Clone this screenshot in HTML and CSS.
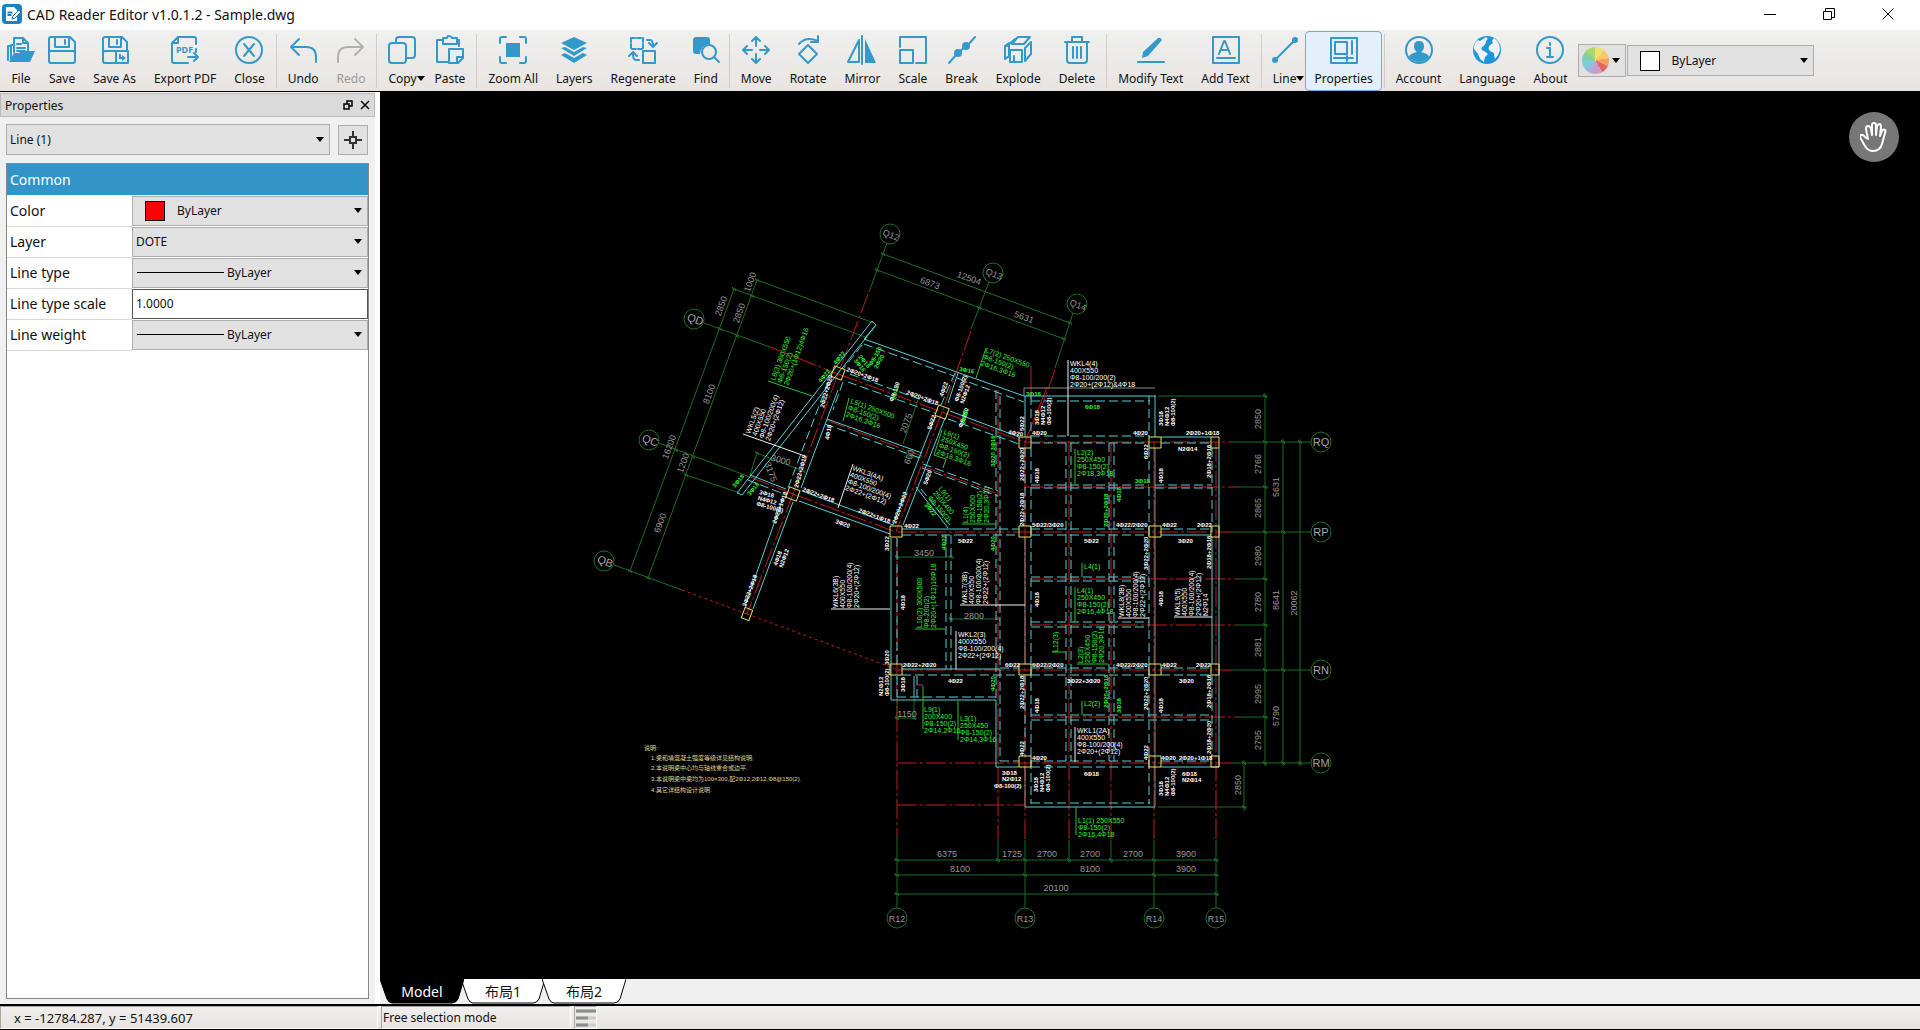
FILE: index.html
```
<!DOCTYPE html>
<html lang="en">
<head>
  <meta charset="UTF-8">
  <meta name="viewport" content="width=device-width, initial-scale=1.0">
  <title>CAD Reader Editor v1.0.1.2 - Sample.dwg</title>
  <link rel="stylesheet" href="styles.css">
</head>
<body>

  <header class="titlebar">
    <svg class="app-logo" viewBox="0 0 20 20"><rect width="20" height="20" rx="4" fill="#1583c4"/><path d="M4 3h8l3 3v11H4z" fill="#fff"/><path d="M5.500 8.500h5M5.500 11h4" stroke="#1583c4" stroke-width="2"/><path d="M10 15l1-3 6-6 2 2-6 6z" fill="#fff" stroke="#1583c4"/></svg>
    <h1>CAD Reader Editor v1.0.1.2 - Sample.dwg</h1>
    <div class="window-buttons">
      <button aria-label="Minimize"><svg viewBox="0 0 12 12"><path d="M0 6.500h12"/></svg></button>
      <button aria-label="Restore"><svg viewBox="0 0 12 12"><path d="M.5 3.500h8v8h-8zM2.500 3.500v-3h9v9h-3"/></svg></button>
      <button aria-label="Close window"><svg viewBox="0 0 12 12"><path d="M.5.5l11 11M11.500.5l-11 11"/></svg></button>
    </div>
  </header>

  <nav class="toolbar">
    <div class="group">
      <button class="tool"><svg viewBox="0 0 28 28"><path d="M4 23V9h3M7 16V2h9l5 5v8M16 2v5h5M10 8h4M10 12h8M10 15h8"/><path class="fill" d="M2 26l5-9h5l2-2h14l-5 11z"/><path d="M1 24V10h3"/></svg><span>File</span></button>
      <button class="tool"><svg viewBox="0 0 28 28"><path d="M1 3q0-2 2-2h19l5 5v19q0 2-2 2H3q-2 0-2-2zM7 1v10h14V1M17 4v4M1 17q0-2 2-2h22q2 0 2 2"/></svg><span>Save</span></button>
      <button class="tool"><svg viewBox="0 0 28 28"><path d="M14 27H4q-2 0-2-2V3q0-2 2-2h17l5 5v8M8 1v10h12V1M16 4v4M2 17q0-2 2-2h11M15 15h12v12H15z"/><path class="fill" d="M18 18v5h3v2l4-3-4-3v2h-1v-3z"/></svg><span>Save As</span></button>
      <button class="tool"><svg viewBox="0 0 28 28"><path d="M25 8V3q0-2-2-2H7L1 7v18q0 2 2 2h14M7 1v6H1M25 13v3M17 21h10M23 17l4 4-4 4"/><text x="5" y="17">PDF</text></svg><span>Export PDF</span></button>
      <button class="tool"><svg viewBox="0 0 28 28"><circle cx="14" cy="14" r="13"/><path d="M9 8l10 12M19 8L9 20"/></svg><span>Close</span></button>
    </div>
    <div class="group">
      <button class="tool"><svg viewBox="0 0 28 28"><path d="M10 3l-8 8 8 8M2 11h15q10 0 10 10v5"/></svg><span>Undo</span></button>
      <button class="tool off" disabled><svg viewBox="0 0 28 28"><path d="M18 3l8 8-8 8M26 11H11Q1 11 1 21v5"/></svg><span>Redo</span></button>
    </div>
    <div class="group">
      <button class="tool"><svg viewBox="0 0 28 28"><rect x="1" y="7" width="17" height="20" rx="3"/><path d="M8 6V4q0-3 3-3h13q3 0 3 3v15q0 3-3 3h-5"/></svg><span class="drop">Copy</span></button>
      <button class="tool"><svg viewBox="0 0 28 28"><path d="M7 4H1v22h11M21 4h2v6M7 2h4q0-2 2-2t3 2h5v6H7zM13 13h14v9l-5 5h-9zM27 21h-6v6"/></svg><span>Paste</span></button>
    </div>
    <div class="group">
      <button class="tool"><svg viewBox="0 0 28 28"><path d="M1 7V3q0-2 2-2h4M21 1h4q2 0 2 2v4M27 21v4q0 2-2 2h-4M7 27H3q-2 0-2-2v-4"/><path class="fill" d="M7 7h14v14H7z"/></svg><span>Zoom All</span></button>
      <button class="tool"><svg viewBox="0 0 28 28"><path class="fill" d="M14 1l13 6-13 7L1 7zM1 12l4-1 9 5 9-5 4 1-13 8zM1 19l4-2 9 5 9-5 4 2-13 8z"/></svg><span>Layers</span></button>
      <button class="tool"><svg viewBox="0 0 28 28"><path d="M2 2h12v11H2z" stroke-dasharray="4 2"/><path d="M14 15h12v12H14zM18 4h3q3 0 3 6M20 7l4 4 4-4M10 24H7q-3 0-3-6M0 20l4-4 4 4"/></svg><span>Regenerate</span></button>
      <button class="tool"><svg viewBox="0 0 28 28"><path class="fill" d="M1 4q0-3 3-3h11q3 0 3 3v4q-9 0-10 10H4q-3 0-3-3z"/><circle cx="17" cy="16" r="7"/><path d="M22 21l5 5"/></svg><span>Find</span></button>
    </div>
    <div class="group">
      <button class="tool"><svg viewBox="0 0 28 28"><path d="M14 2v8M14 18v8M2 14h8M18 14h8M10 5l4-4 4 4M10 23l4 4 4-4M5 10l-4 4 4 4M23 10l4 4-4 4"/></svg><span>Move</span></button>
      <button class="tool"><svg viewBox="0 0 28 28"><path d="M14 9l9 9-9 9-9-9zM5 8q7-8 19-3M24 0v6h-7"/></svg><span>Rotate</span></button>
      <button class="tool"><svg viewBox="0 0 28 28"><path d="M11 4v22H0z"/><path class="fill" d="M17 3v24h11z"/><path d="M14 0v28" stroke-dasharray="4 1"/></svg><span>Mirror</span></button>
      <button class="tool"><svg viewBox="0 0 28 28"><path d="M1 11V1h26v26H17M1 14h13v13H1z"/></svg><span>Scale</span></button>
      <button class="tool"><svg viewBox="0 0 28 28"><path d="M1 27l7-8M20 9l7-8M10 17l8-7" /><circle class="fill" cx="10" cy="17" r="4"/><circle class="fill" cx="18" cy="10" r="4"/></svg><span>Break</span></button>
      <button class="tool"><svg viewBox="0 0 28 28"><path d="M6 14h12v12H6zM1 23V10l4-3v13zM8 8l6-7h12l-6 7zM21 12l6-6v12l-6 7zM3 10l8-7M10 20v6"/></svg><span>Explode</span></button>
      <button class="tool"><svg viewBox="0 0 28 28"><path d="M2 6h24M9 5V1h10v4M4 7v17q0 3 3 3h14q3 0 3-3V7M10 11v11M14 11v11M18 11v11"/></svg><span>Delete</span></button>
    </div>
    <div class="group">
      <button class="tool"><svg viewBox="0 0 28 28"><path class="fill" d="M20 3q3-3 5 1L11 20l-6 2 1-6z"/><path d="M1 26h26"/></svg><span>Modify Text</span></button>
      <button class="tool"><svg viewBox="0 0 28 28"><path d="M1 1h26v26H1zM5 22h18M7 18l5-13h1l5 13M9 14h7"/></svg><span>Add Text</span></button>
    </div>
    <div class="group">
      <button class="tool"><svg viewBox="0 0 28 28"><path d="M4 24L24 4"/><circle class="fill" cx="4" cy="24" r="3"/><circle class="fill" cx="24" cy="4" r="3"/></svg><span class="drop">Line</span></button>
      <button class="tool active"><svg viewBox="0 0 28 28"><path d="M1 2h26v25H1zM5 6h12v12H5zM22 5v13M4 22h19M17 20v5"/></svg><span>Properties</span></button>
    </div>
    <div class="group">
      <button class="tool"><svg viewBox="0 0 28 28"><circle cx="14" cy="14" r="13"/><path class="fill" d="M14 5q5 0 5 5 0 4-3 6 8 2 8 5-4 5-10 5T4 21q0-3 8-5-3-2-3-6 0-5 5-5z"/></svg><span>Account</span></button>
      <button class="tool"><svg viewBox="0 0 28 28"><circle class="globe" cx="14" cy="14" r="14"/><path class="land" d="M13 1q3 2 0 4 0 4-4 6-2 3 2 4l4 3-3 3-1 5q-5-3-6-8l-4-5q-1-5 4-9l2 1zM21 2q6 4 6 12-1 5-5 9-1-3-1-6l-4-2q-3-3 0-6l3-2-1-2z"/></svg><span>Language</span></button>
      <button class="tool"><svg viewBox="0 0 28 28"><circle cx="14" cy="14" r="13"/><path d="M11 12h3v9M11 21h6M14 7v2"/></svg><span>About</span></button>
    </div>
    <button class="color-picker" aria-label="Color"><span class="wheel"></span><span class="arrow"></span></button>
    <div class="combo top-color">
      <i class="swatch white"></i>
      <select aria-label="Current color"><option>ByLayer</option></select>
    </div>
  </nav>

  <main class="workspace">
    <aside class="panel">
      <div class="panel-head">
        <h2>Properties</h2>
        <button aria-label="Float panel"><svg viewBox="0 0 10 10"><path d="M1 4h5v5H1zM4 4V1h5v5H6"/></svg></button>
        <button aria-label="Close panel"><svg viewBox="0 0 10 10"><path d="M1 1l8 8M9 1L1 9"/></svg></button>
      </div>
      <div class="picker">
        <div class="combo"><select aria-label="Selected entity"><option>Line (1)</option></select></div>
        <button class="pick" aria-label="Pick entity"><svg viewBox="0 0 18 18"><path d="M6 6h6v6H6zM9 0v6M9 12v6M0 9h6M12 9h6"/></svg></button>
      </div>
      <div class="sheet">
        <table>
          <colgroup><col class="key"><col></colgroup>
          <thead>
            <tr><th colspan="2">Common</th></tr>
          </thead>
          <tbody>
            <tr>
              <th><label for="color">Color</label></th>
              <td><div class="combo"><i class="swatch red"></i><select id="color"><option>ByLayer</option></select></div></td>
            </tr>
            <tr>
              <th><label for="layer">Layer</label></th>
              <td><div class="combo"><select id="layer"><option>DOTE</option></select></div></td>
            </tr>
            <tr>
              <th><label for="ltype">Line type</label></th>
              <td><div class="combo"><i class="stroke"></i><select id="ltype"><option>ByLayer</option></select></div></td>
            </tr>
            <tr>
              <th><label for="lscale">Line type scale</label></th>
              <td><input id="lscale" type="text" value="1.0000"></td>
            </tr>
            <tr>
              <th><label for="lweight">Line weight</label></th>
              <td><div class="combo"><i class="stroke"></i><select id="lweight"><option>ByLayer</option></select></div></td>
            </tr>
          </tbody>
        </table>
      </div>
    </aside>

    <section class="view">
      <div class="model">
        <svg id="drawing" viewBox="380 92 1540 887"></svg>
        <button class="pan" aria-label="Pan"><svg viewBox="0 0 28 32"><path d="M8 18L6 8q0-3 2-3t3 3l1 6V4q0-2 2-2t2 2v10l1-9q1-2 3-2 1 1 1 3l-1 9 2-5q1-2 3-1 1 1 0 3l-3 11q-2 7-9 7-5 0-8-5l-4-7q-2-3 0-4t4 2z"/></svg></button>
      </div>
      <div class="tabs">
        <button class="tab current"><svg viewBox="0 0 84 25" preserveAspectRatio="none"><path d="M0 0l7 20q2 4 5 4h60q4 0 6-4l6-20z"/></svg><span>Model</span></button>
        <button class="tab"><svg viewBox="0 0 84 25" preserveAspectRatio="none"><path d="M0 0l7 20q2 4 5 4h60q4 0 6-4l6-20"/></svg><span>布局1</span></button>
        <button class="tab"><svg viewBox="0 0 84 25" preserveAspectRatio="none"><path d="M0 0l7 20q2 4 5 4h60q4 0 6-4l6-20"/></svg><span>布局2</span></button>
      </div>
    </section>
  </main>

  <footer class="status">
    <span class="coords">x = -12784.287, y = 51439.607</span>
    <span class="mode">Free selection mode</span>
    <span class="bars"><svg viewBox="0 0 20 18"><path d="M0 2h20M0 9h20M0 16h20" stroke="#ccc" stroke-width="3"/><path d="M0 2h20M0 9h12M0 16h12" stroke="#8c8c8c" stroke-width="3"/></svg></span>
  </footer>

  <script src="drawing.js"></script>
</body>
</html>
```

FILE: styles.css
```
* {
  box-sizing: border-box;
}

body {
  margin: 0;
  height: 100vh;
  display: flex;
  flex-direction: column;
  font-family: 'Noto Sans', 'Noto Sans CJK SC', sans-serif;
  font-size: 12px;
  color: #111;
  background: #fff;
  border-bottom: 1px solid #000;
}

button, select, input {
  font: inherit;
  color: inherit;
}

h1, h2 {
  margin: 0;
  font-weight: normal;
}

svg {
  display: block;
  fill: none;
}

/* title bar */
.titlebar {
  height: 30px;
  display: flex;
  align-items: center;
  padding: 0 3px 2px 2px;
  flex: none;
}

.app-logo {
  width: 20px;
  height: 20px;
}

.titlebar h1 {
  font-size: 14px;
  margin-left: 5px;
  flex: 1;
}

.window-buttons {
  display: flex;
}

.window-buttons button {
  width: 59px;
  height: 28px;
  padding: 0;
  border: 0;
  background: none;
  display: grid;
  place-items: center;
}

.window-buttons svg {
  width: 12px;
  height: 12px;
  stroke: #000;
}

/* toolbar */
.toolbar {
  flex: none;
  height: 62px;
  display: flex;
  align-items: center;
  padding-left: 2px;
  background: linear-gradient(#f0f0ee, #e8e4e1);
  border-bottom: 1px solid #000;
}

.group {
  display: flex;
  align-items: center;
  height: 54px;
}

.group + .group {
  border-left: 1px solid #cfcdcb;
  margin-left: 2px;
  padding-left: 2px;
}

.tool {
  height: 60px;
  padding: 4px 8px 0;
  border: 1px solid transparent;
  border-radius: 4px;
  background: none;
  display: flex;
  flex-direction: column;
  align-items: center;
  gap: 6px;
  line-height: 18px;
  white-space: nowrap;
}

.tool svg {
  width: 28px;
  height: 28px;
  margin: 0 -4px;
  overflow: visible;
  stroke: #3399cb;
  stroke-width: 2;
  stroke-linecap: round;
  stroke-linejoin: round;
}

.tool .fill {
  fill: #3399cb;
  stroke: none;
}

.tool svg text {
  fill: #3399cb;
  stroke: none;
  font-size: 9px;
  font-weight: bold;
}

.tool .globe {
  fill: #1b96dd;
  stroke: none;
}

.tool .land {
  fill: #f2f1ef;
  stroke: none;
}

.tool.off {
  color: #999;
}

.tool.off svg {
  stroke: #b3b1af;
}

.tool.active {
  background: #e5effc;
  border-color: #7ea4de;
}

.drop {
  display: flex;
  align-items: center;
}

.drop::after,
.arrow {
  content: "";
  border: 4px solid transparent;
  border-top: 5px solid #000;
  border-bottom: 0;
}

.drop::after {
  margin-right: -8px;
}

.color-picker {
  width: 48px;
  height: 33px;
  margin-left: 1px;
  padding: 0 5px 0 3px;
  border: 1px solid #adadad;
  background: #e1e1e1;
  display: flex;
  align-items: center;
  justify-content: space-between;
}

.wheel {
  width: 27px;
  height: 27px;
  border-radius: 50%;
  background: conic-gradient(#f0e070 0 40deg, #f5c76a 0 80deg, #f0a060 0 115deg, #e56560 0 150deg, #c9a0cc 0 200deg, #9bb8e0 0 235deg, #79cfd3 0 275deg, #7fcfa8 0 310deg, #a6d86c 0);
}

/* combo boxes */
.combo {
  display: flex;
  align-items: center;
  min-width: 0;
  height: 31px;
  border: 1px solid #adadad;
  background: #e1e1e1;
}

.combo select {
  flex: 1;
  min-width: 0;
  height: 100%;
  padding: 0 3px;
  border: 0;
  background: none;
  appearance: none;
}

.combo::after {
  content: "";
  margin-right: 5px;
  border: 4px solid transparent;
  border-top: 5px solid #000;
  border-bottom: 0;
}

.combo.top-color {
  width: 187px;
  margin-left: 1px;
}

.swatch {
  width: 20px;
  height: 20px;
  border: 1px solid #000;
  margin: 0 9px 0 12px;
}

.swatch.white {
  background: #fff;
}

.swatch.red {
  background: #f00;
}

.stroke {
  width: 87px;
  height: 1px;
  margin-left: 4px;
  background: #000;
}

/* properties panel */
.workspace {
  flex: 1;
  min-height: 0;
  display: flex;
}

.panel {
  width: 380px;
  flex: none;
  display: flex;
  flex-direction: column;
  background: #f0f0f0;
  border-right: 5px solid #fcfcfc;
  padding-top: 1px;
}

.panel-head {
  height: 24px;
  display: flex;
  align-items: center;
  padding: 0 4px;
  background: #dadada;
  border: 1px solid #b9b9b9;
}

.panel-head h2 {
  font-size: 12px;
  flex: 1;
}

.panel-head button {
  padding: 0;
  margin-left: 7px;
  border: 0;
  background: none;
}

.panel-head svg {
  width: 10px;
  height: 10px;
  stroke: #000;
  stroke-width: 1.5;
}

.picker {
  display: flex;
  align-items: center;
  gap: 8px;
  padding: 7px 7px 8px 6px;
}

.picker .combo {
  flex: 1;
}

.pick {
  width: 30px;
  height: 30px;
  padding: 0;
  border: 1px solid #adadad;
  background: #e1e1e1;
  display: grid;
  place-items: center;
}

.pick svg {
  width: 18px;
  height: 18px;
  stroke: #333;
  stroke-width: 2;
}

.sheet {
  flex: 1;
  margin: 0 6px 5px;
  border: 1px solid #888;
  background: #fff;
}

.sheet table {
  width: 100%;
  table-layout: fixed;
  border-collapse: collapse;
}

.sheet .key {
  width: 125px;
}

.sheet tr {
  height: 31px;
}

.sheet th {
  padding: 0 3px;
  text-align: left;
  font-size: 14px;
  font-weight: normal;
}

.sheet thead th {
  background: #3294c7;
  color: #fff;
}

.sheet tbody th {
  border-bottom: 1px solid #d8d8d8;
}

.sheet td {
  padding: 0;
}

.sheet .combo {
  height: 30px;
}

.sheet input {
  display: block;
  width: 100%;
  height: 30px;
  padding: 0 3px;
  border: 1px solid #555;
  background: #fff;
}

/* drawing area */
.view {
  flex: 1;
  min-width: 0;
  display: flex;
  flex-direction: column;
}

.model {
  flex: 1;
  min-height: 0;
  position: relative;
  background: #000;
}

#drawing {
  width: 100%;
  height: 100%;
  font-family: 'Liberation Sans', 'Noto Sans CJK SC', sans-serif;
}

#drawing path, #drawing circle {
  stroke-width: 1;
}

.cyan { stroke: #55cfd6; }
.dash { stroke: #55cfd6; stroke-dasharray: 9 4; }
.axis { stroke: #c01c1c; stroke-dasharray: 20 3 3 3; }
.dots { stroke: #c01c1c; stroke-dasharray: 3 3; }
.red { stroke: #c01c1c; }
.green { stroke: #1b6e22; }
.lime { stroke: #2fc02f; }
.white { stroke: #f2f2f2; }
.gray { stroke: #8a8a8a; }
.pink { stroke: #b030b0; }
.node { stroke: #e8e060; }
.ring { stroke: #1b6e22; }

.t-dim { fill: #979797; font-size: 9px; }
.t-axis { fill: #a5a5a5; font-size: 11px; }
.t-white { fill: #fff; font-size: 7px; }
.t-lime { fill: #35f035; font-size: 7px; }
.t-small { fill: #fff; font-size: 6px; font-weight: bold; }
.t-tiny { fill: #35f035; font-size: 6px; font-weight: bold; }
.t-note { fill: #e6d28a; font-size: 6px; }

.pan {
  position: absolute;
  top: 20px;
  right: 21px;
  width: 50px;
  height: 50px;
  padding: 0;
  border: 0;
  border-radius: 50%;
  background: #777;
  display: grid;
  place-items: center;
}

.pan svg {
  width: 28px;
  height: 32px;
  stroke: #fff;
  stroke-width: 2;
  stroke-linejoin: round;
}

.tabs {
  flex: none;
  height: 25px;
  display: flex;
  background: #f0f0f0;
}

.tab {
  width: 84px;
  height: 25px;
  padding: 0;
  margin-right: -3px;
  border: 0;
  background: none;
  display: grid;
  font-size: 14px;
  line-height: 26px;
}

.tab svg, .tab span {
  grid-area: 1 / 1;
}

.tab svg {
  width: 84px;
  height: 25px;
  fill: #fff;
  stroke: #000;
}

.tab.current {
  color: #fff;
  z-index: 1;
}

.tab.current svg {
  fill: #000;
}

/* status bar */
.status {
  flex: none;
  height: 25px;
  display: flex;
  gap: 3px;
  border-top: 2px solid #000;
  background: linear-gradient(#f0f0ee, #e6e2df);
  line-height: 22px;
}

.status span {
  border: 1px solid #a8a6a3;
  border-right-color: #fff;
  border-bottom-color: #fff;
}

.coords {
  width: 378px;
  padding-left: 13px;
  font-size: 13px;
}

.mode {
  width: 190px;
  padding-left: 1px;
}

.bars {
  width: 23px;
  padding: 2px 1px;
}

.bars svg {
  width: 20px;
  height: 18px;
}
```

FILE: drawing.js
```
const NS = 'http://www.w3.org/2000/svg';
const svg = document.getElementById('drawing');

function add(tag, attrs, text) {
  const el = document.createElementNS(NS, tag);
  for (const k in attrs) el.setAttribute(k, attrs[k]);
  if (text) el.textContent = text;
  svg.appendChild(el);
}

// each entry is [x1, y1, x2, y2]
function lines(cls, list) {
  add('path', { class: cls, d: list.map(l => `M${l[0]} ${l[1]}L${l[2]} ${l[3]}`).join('') });
}

// each entry is [x, y, angle, text, ...more lines]
function texts(cls, pitch, list, anchor) {
  list.forEach(([x, y, a, ...rows]) => {
    rows.forEach((row, i) => {
      add('text', {
        class: cls, x: x, y: y + i * pitch,
        transform: `rotate(${a} ${x} ${y})`,
        'text-anchor': anchor || 'start'
      }, row);
    });
  });
}

// dimension chains and extension lines
lines('green', [
  [1265, 393, 1265, 766], [1283, 439, 1283, 766], [1300, 439, 1300, 766], [1244, 760, 1244, 811],
  [1158, 396, 1268, 396], [1232, 442, 1311, 442], [1237, 487, 1268, 487], [1232, 532, 1311, 532],
  [1237, 579, 1268, 579], [1237, 625, 1268, 625], [1232, 670, 1311, 670], [1237, 717, 1268, 717],
  [1232, 763, 1311, 763], [1158, 807, 1247, 807],
  [894, 860, 1219, 860], [894, 875, 1219, 875], [894, 894, 1219, 894],
  [897, 836, 897, 908], [998, 840, 998, 863], [1025, 840, 1025, 908], [1069, 840, 1069, 863],
  [1111, 840, 1111, 863], [1154, 840, 1154, 908], [1216, 840, 1216, 908],
  [895, 557, 954, 557], [949, 619, 1000, 619], [895, 718, 917, 718], [897, 701, 897, 720], [914, 698, 914, 720],
  [883, 254, 1070, 323], [877, 270, 1064, 339],
  [887, 243, 869, 292], [989, 282, 971, 329], [1073, 313, 1055, 368],
  [734, 289, 630, 571], [757, 280, 648, 578], [757, 280, 874, 323], [734, 289, 868, 338],
  [704, 323, 770, 347], [659, 443, 750, 477], [686, 475, 740, 493], [614, 565, 682, 590],
  [918, 400, 903, 444], [757, 453, 803, 471], [757, 453, 750, 475], [904, 457, 922, 457]
]);

// ticks where chains meet extensions
[[1265, 396], [1265, 442], [1265, 487], [1265, 532], [1265, 579], [1265, 625], [1265, 670], [1265, 717], [1265, 763],
 [1283, 442], [1283, 532], [1283, 670], [1283, 763], [1300, 442], [1300, 763], [1244, 763], [1244, 807],
 [897, 860], [998, 860], [1025, 860], [1069, 860], [1111, 860], [1154, 860], [1216, 860],
 [897, 875], [1025, 875], [1154, 875], [1216, 875], [897, 894], [1216, 894],
 [897, 557], [951, 557], [951, 619], [998, 619], [897, 718], [914, 718],
 [883, 254], [1070, 323], [877, 270], [979, 308], [1064, 339],
 [734, 289], [720, 329], [676, 450], [630, 571], [757, 280], [752, 296], [737, 336], [693, 457], [686, 475], [648, 578],
 [757, 453], [803, 471]
].forEach(([x, y]) => add('path', { class: 'green tick', d: `M${x - 2} ${y - 2}l4 4M${x - 2} ${y}h4` }));

// grid axes
lines('axis', [
  [897, 538, 897, 836], [998, 390, 998, 840], [1025, 442, 1025, 840], [1069, 442, 1069, 840],
  [1111, 442, 1111, 840], [1154, 442, 1154, 840], [1216, 442, 1216, 840],
  [1025, 442, 1232, 442], [1025, 487, 1237, 487], [897, 532, 1232, 532], [1031, 579, 1237, 579],
  [1031, 625, 1237, 625], [897, 670, 1232, 670], [1031, 717, 1237, 717], [897, 763, 1232, 763], [897, 805, 1025, 805],
  [868, 294, 838, 374], [971, 331, 942, 412], [1055, 370, 1035, 425], [770, 347, 838, 374],
  [838, 374, 942, 412], [942, 412, 1025, 442], [838, 374, 793, 494], [793, 494, 747, 614],
  [942, 412, 896, 532], [750, 477, 793, 494], [793, 494, 896, 532], [826, 420, 922, 456], [922, 466, 998, 494]
]);
lines('dots', [[682, 590, 747, 614], [747, 614, 896, 669]]);
lines('red', [[1031, 366, 1031, 400], [1047, 387, 1025, 442]]);

// beam edges in view
lines('cyan', [
  [1024, 396, 1156, 396], [1025, 396, 1025, 437], [1155, 396, 1155, 437], [1161, 437, 1211, 437],
  [1219, 448, 1219, 767], [1212, 537, 1212, 664], [1161, 767, 1219, 767], [1161, 535, 1211, 535],
  [996, 767, 1019, 767], [1025, 807, 1155, 807], [996, 700, 996, 767],
  [891, 538, 891, 700], [891, 700, 996, 700], [902, 669, 1000, 669], [902, 529, 960, 529], [914, 676, 914, 697],
  [872, 321, 737, 493], [876, 325, 742, 495], [872, 321, 876, 325], [737, 493, 742, 495],
  [864, 339, 1024, 396], [864, 339, 876, 325], [958, 373, 948, 403],
  [838, 390, 801, 488], [783, 498, 745, 606], [793, 502, 753, 609],
  [935, 417, 893, 525], [945, 418, 903, 525], [802, 491, 893, 525], [799, 501, 890, 534],
  [750, 475, 786, 489], [827, 419, 922, 453], [916, 487, 948, 528], [950, 411, 1019, 437]
]);
lines('dash', [
  [1031, 401, 1150, 401], [1031, 396, 1031, 437], [1149, 396, 1149, 437], [1031, 436, 1149, 436],
  [1031, 443, 1149, 443], [1161, 443, 1211, 443],
  [1031, 485, 1149, 485], [1031, 488, 1149, 488], [1155, 485, 1212, 485], [1155, 488, 1212, 488],
  [960, 529, 1019, 529], [902, 535, 1019, 535], [1031, 529, 1149, 529], [1031, 535, 1149, 535], [1161, 529, 1211, 529],
  [1031, 577, 1149, 577], [1031, 581, 1149, 581], [1031, 622, 1149, 622], [1031, 627, 1149, 627],
  [1000, 668, 1019, 668], [902, 675, 1019, 675], [1031, 668, 1149, 668], [1031, 675, 1149, 675],
  [1161, 668, 1211, 668], [1161, 675, 1211, 675],
  [1031, 715, 1212, 715], [1031, 720, 1212, 720], [1000, 761, 1019, 761], [1031, 761, 1149, 761], [1031, 767, 1149, 767],
  [1161, 761, 1211, 761], [1031, 803, 1150, 803], [897, 697, 996, 697],
  [1031, 448, 1031, 804], [1149, 448, 1149, 804], [1066, 443, 1066, 761], [1071, 443, 1071, 761],
  [1109, 443, 1109, 761], [1114, 443, 1114, 761], [1212, 448, 1212, 532], [1212, 676, 1212, 756],
  [897, 538, 897, 664], [946, 535, 946, 669], [951, 535, 951, 669], [996, 390, 996, 700], [1000, 396, 1000, 761],
  [897, 676, 897, 697], [917, 676, 917, 697], [1025, 448, 1025, 526], [1025, 676, 1025, 756],
  [864, 344, 954, 376], [957, 378, 1024, 402], [955, 373, 941, 405], [862, 345, 843, 369],
  [850, 374, 933, 404], [848, 382, 935, 413], [948, 419, 1019, 444],
  [828, 382, 788, 488], [843, 382, 833, 410], [748, 480, 784, 494], [825, 424, 920, 458],
  [923, 464, 998, 491], [922, 468, 998, 496], [921, 489, 950, 525]
]);
lines('gray', [[1024, 388, 1155, 388], [1024, 388, 1024, 396], [1155, 448, 1155, 807], [1025, 537, 1025, 664], [1025, 767, 1025, 807]]);

// leaders
lines('white', [
  [1068, 360, 1068, 436], [831, 609, 890, 609], [960, 605, 1025, 605], [956, 631, 956, 669],
  [1118, 618, 1149, 618], [1174, 617, 1212, 617], [1075, 727, 1075, 762], [743, 434, 805, 456], [853, 464, 838, 508]
]);
lines('lime', [
  [923, 686, 923, 729], [958, 701, 958, 740], [1075, 449, 1075, 484], [1082, 563, 1082, 577], [1075, 587, 1075, 622],
  [1052, 652, 1066, 652], [1077, 664, 1108, 664], [1082, 701, 1082, 715], [1076, 807, 1076, 835],
  [915, 629, 946, 629], [962, 524, 996, 524], [768, 381, 812, 396], [986, 348, 976, 378], [849, 398, 843, 421],
  [942, 430, 934, 455], [934, 455, 946, 459], [946, 459, 943, 468]
]);
lines('pink', [[917, 685, 923, 685]]);

// columns
[[1019, 437, 12], [1149, 437, 12], [1211, 437, 8], [890, 526, 12], [1019, 526, 12], [1149, 526, 12], [1211, 526, 8],
 [890, 664, 12], [1019, 664, 12], [1149, 664, 12], [1211, 664, 8], [1019, 756, 12], [1149, 756, 12], [1211, 756, 8]
].forEach(([x, y, w]) => add('path', { class: 'node', d: `M${x} ${y}h${w}v11h-${w}z` }));
[[838, 373, 11], [942, 412, 11], [793, 494, 11], [747, 614, 8]].forEach(([x, y, w]) =>
  add('path', { class: 'node', d: `M${x - w / 2} ${y - 5.5}h${w}v11h-${w}z`, transform: `rotate(20 ${x} ${y})` }));

// axis bubbles
[[890, 234, 'Q12', 20], [993, 273, 'Q13', 20], [1077, 304, 'Q14', 20], [694, 319, 'QD', 20], [649, 440, 'QC', 20], [604, 561, 'QB', 20],
 [1321, 442, 'RQ', 0], [1321, 532, 'RP', 0], [1321, 670, 'RN', 0], [1321, 763, 'RM', 0],
 [897, 918, 'R12', 0], [1025, 918, 'R13', 0], [1154, 918, 'R14', 0], [1216, 918, 'R15', 0]
].forEach(([x, y, name, a]) => {
  add('circle', { class: 'ring', cx: x, cy: y, r: 10 });
  const size = name.length > 2 ? 't-dim' : 't-axis';
  texts(size, 0, [[x, y + 4, a, name]], 'middle');
});

texts('t-dim', 0, [
  [1261, 419, -90, '2850'], [1261, 464, -90, '2766'], [1261, 508, -90, '2865'], [1261, 556, -90, '2980'],
  [1261, 602, -90, '2780'], [1261, 647, -90, '2881'], [1261, 694, -90, '2995'], [1261, 740, -90, '2795'],
  [1279, 487, -90, '5631'], [1279, 600, -90, '8641'], [1279, 716, -90, '5790'], [1297, 603, -90, '20062'], [1241, 785, -90, '2850'],
  [947, 857, 0, '6375'], [1012, 857, 0, '1725'], [1047, 857, 0, '2700'], [1090, 857, 0, '2700'], [1133, 857, 0, '2700'], [1186, 857, 0, '3900'],
  [960, 872, 0, '8100'], [1090, 872, 0, '8100'], [1186, 872, 0, '3900'], [1056, 891, 0, '20100'],
  [924, 556, 0, '3450'], [974, 619, 0, '2800'], [907, 717, 0, '1150'],
  [929, 286, 20, '6873'], [968, 281, 20, '12504'], [1023, 320, 20, '5631'],
  [753, 283, -70, '1000'], [724, 307, -70, '2850'], [742, 314, -70, '2850'], [712, 395, -70, '8100'],
  [672, 448, -70, '16200'], [686, 464, -70, '1200'], [663, 524, -70, '6900'],
  [780, 463, 15, '3000'], [768, 473, 70, '3175'], [909, 424, -70, '2075'], [912, 458, -70, '600']
], 'middle');

texts('t-white', 7, [
  [1070, 366, 0, 'WKL4(4)', '400X550', 'Φ8-100/200(2)', '2Φ20+(2Φ12)&4Φ18'],
  [958, 637, 0, 'WKL2(3)', '400X550', 'Φ8-100/200(4)', '2Φ22+(2Φ12)'],
  [1077, 733, 0, 'WKL1(2A)', '400X550', 'Φ8-100/200(4)', '2Φ20+(2Φ12)'],
  [838, 608, -90, 'WKL6(3B)', '400X550', 'Φ8-100/200(4)', '2Φ20+(2Φ12)'],
  [967, 604, -90, 'WKL7(3B)', '400X550', 'Φ8-100/200(4)', '2Φ22+(2Φ12)'],
  [1124, 617, -90, 'WKL8(3B)', '400X550', 'Φ8-100/200(4)', '2Φ22+(2Φ12)'],
  [1180, 616, -90, 'WKL9(5)', '400X550', 'Φ8-100/200(4)', '2Φ20+(2Φ12)', 'N2Φ14'],
  [750, 434, -70, 'WKL5(2)', '400X550', 'Φ8-100/200(4)', '2Φ20+(2Φ12)'],
  [852, 470, 20, 'WKL3(4A)', '400X550', 'Φ8-100/200(4)', '2Φ22+(2Φ12)']
]);

texts('t-lime', 7, [
  [924, 712, 0, 'L9(1)', '200X400', 'Φ8-150(2)', '2Φ14,2Φ16'],
  [960, 721, 0, 'L3(1)', '250X450', 'Φ8-150(2)', '2Φ14,3Φ16'],
  [1077, 455, 0, 'L2(2)', '250X450', 'Φ8-150(2)', '2Φ18,3Φ18'],
  [1084, 569, 0, 'L4(1)'],
  [1077, 593, 0, 'L4(1)', '250X450', 'Φ8-150(2)', '2Φ16,4Φ18'],
  [1084, 706, 0, 'L2(2)'],
  [1078, 823, 0, 'L1(1) 250X550', 'Φ8-150(2)', '2Φ16,4Φ18'],
  [1058, 652, -90, 'L12(3)'],
  [1083, 663, -90, 'L2(3)', '250X450', 'Φ8-150(2)', '2Φ20,3Φ16'],
  [922, 628, -90, 'L10(2) 300X500', 'Φ8-200(2)', '2Φ20+(1Φ12)16Φ18'],
  [968, 523, -90, 'L1(4)', '250X500', 'Φ8-150(2)', '2Φ20,3Φ20'],
  [775, 381, -70, 'L8(3) 300X550', 'Φ8-150(2)', '2Φ20+(1Φ12)4Φ16'],
  [985, 352, 20, 'L7(2) 250X550', 'Φ8-150(2)', '2Φ16,3Φ16'],
  [850, 403, 20, 'L5(1) 250X500', 'Φ8-150(2)', '2Φ16,3Φ16'],
  [943, 434, 20, 'L6(1)', '250X450', 'Φ8-150(2)', '2Φ16,3Φ16'],
  [938, 489, 50, 'L9(1)', '250X400', 'Φ8-150(2)']
]);

texts('t-small', 6, [
  [904, 528, 0, '4Φ22'], [958, 543, 0, '5Φ22'], [903, 667, 0, '2Φ22+2Φ20'], [1005, 667, 0, '6Φ22'], [948, 683, 0, '4Φ22'],
  [1032, 435, 0, '4Φ20'], [1133, 435, 0, '4Φ20'], [1186, 435, 0, '2Φ20+1Φ18'], [1178, 451, 0, 'N2Φ14'],
  [1032, 527, 0, '5Φ22/3Φ20'], [1116, 527, 0, '4Φ22/2Φ20'], [1162, 527, 0, '4Φ22'], [1197, 527, 0, '2Φ22'],
  [1084, 543, 0, '5Φ22'], [1178, 543, 0, '3Φ20'],
  [1032, 667, 0, '6Φ22/2Φ20'], [1116, 667, 0, '4Φ22/2Φ20'], [1162, 667, 0, '4Φ22'], [1196, 667, 0, '2Φ22'],
  [1067, 683, 0, '3Φ22+3Φ20'], [1179, 683, 0, '3Φ20'],
  [1032, 760, 0, '4Φ20'], [1161, 760, 0, '4Φ20'], [1179, 760, 0, '2Φ20+1Φ18'], [1084, 776, 0, '6Φ18'],
  [1182, 776, 0, '6Φ18', 'N2Φ14'], [1002, 775, 0, '3Φ18', 'N2Φ12'], [994, 788, 0, 'Φ8-100(2)'],
  [1024, 481, -90, '2Φ22+2Φ20'], [1024, 526, -90, '2Φ22+2Φ18'], [1039, 483, -90, '4Φ18'], [1039, 607, -90, '4Φ18'],
  [1148, 459, -90, '6Φ22'], [1163, 483, -90, '4Φ18'], [1211, 478, -90, '2Φ18+2Φ16'], [1148, 570, -90, '3Φ22+2Φ20'],
  [1211, 569, -90, '2Φ18+2Φ16'], [1163, 606, -90, '4Φ18'], [1024, 709, -90, '2Φ22+2Φ18'], [1039, 713, -90, '4Φ18'],
  [1148, 710, -90, '2Φ22+2Φ20'], [1163, 713, -90, '4Φ18'], [1211, 708, -90, '2Φ18+2Φ16'], [1211, 754, -90, '2Φ18+2Φ20'],
  [1024, 756, -90, '4Φ22'], [1148, 760, -90, '4Φ22'],
  [1039, 425, -90, '3Φ18', 'N4Φ12', 'Φ8-100(2)'], [1163, 426, -90, '3Φ18', 'N4Φ12', 'Φ8-100(2)'],
  [1038, 792, -90, '3Φ18', 'N4Φ12', 'Φ8-100(2)'], [1163, 796, -90, '3Φ18', 'N4Φ12', 'Φ8-100(2)'],
  [889, 551, -90, '3Φ22'], [905, 610, -90, '4Φ18'], [889, 665, -90, '3Φ20'], [905, 692, -90, '3Φ18'],
  [883, 696, -90, 'N2Φ12', 'Φ8-100(2)'], [1024, 431, -90, '5Φ22'], [1008, 434, 10, '4Φ20'],
  [846, 371, 20, '2Φ20+2Φ18'], [906, 394, 20, '2Φ20+2Φ18'], [943, 397, -70, '4Φ22'], [958, 402, -70, 'Φ8-100(2)', 'N2Φ12'],
  [893, 402, -70, 'Φ8-150'], [962, 428, -70, 'Φ8-150'], [931, 430, -70, '5Φ22'],
  [824, 408, -75, '2Φ22+2Φ20'], [829, 440, -80, '4Φ18'], [927, 485, -70, '5Φ20'],
  [802, 491, 20, '2Φ22+2Φ18'], [858, 512, 20, '2Φ22+1Φ18'], [835, 523, 20, '3Φ20'], [759, 494, 15, '3Φ18', 'N4Φ12', 'Φ8-100(2)'],
  [776, 524, -70, '2Φ22+1Φ18'], [798, 488, -75, '2Φ22+2Φ18'], [777, 566, -70, '4Φ18', 'N2Φ12'], [746, 607, -70, '2Φ22+2Φ18'],
  [896, 524, -70, '2Φ20+2Φ22']
]);

texts('t-tiny', 6, [
  [1085, 409, 0, '6Φ18'], [1026, 396, 0, '3Φ16'], [1135, 483, 0, '3Φ18'], [1108, 527, -90, '2Φ20+2Φ18'], [1121, 502, -90, '4Φ18'],
  [1108, 708, -90, '2Φ20+2Φ18'], [1121, 713, -90, '3Φ18'], [946, 550, -90, '4Φ22'], [995, 551, -90, '4Φ20'],
  [995, 691, -90, '4Φ20'], [995, 467, -90, '3Φ20 3Φ16'], [959, 371, 10, '3Φ16'], [836, 365, -50, '4Φ22'], [821, 383, -50, '4Φ22'],
  [858, 357, 50, '2Φ18', '3Φ16'], [872, 366, -60, 'Φ8-150', '2Φ20'], [896, 400, -80, '2Φ18'], [965, 425, -80, '2Φ16'],
  [735, 488, -50, '3Φ18'], [750, 496, -50, '3Φ18'], [924, 505, 50, '3Φ22']
]);

texts('t-note', 0, [
  [644, 750, 0, '说明:'],
  [651, 760, 0, '1.梁和墙混凝土强度等级详见结构说明;'],
  [651, 770, 0, '2.本说明梁中心均与轴线重合或边平.'],
  [651, 781, 0, '3.本说明梁中梁均为100×300,配2Φ12;2Φ12,Φ8@150(2).'],
  [651, 792, 0, '4.其它详结构设计说明.']
]);
```
